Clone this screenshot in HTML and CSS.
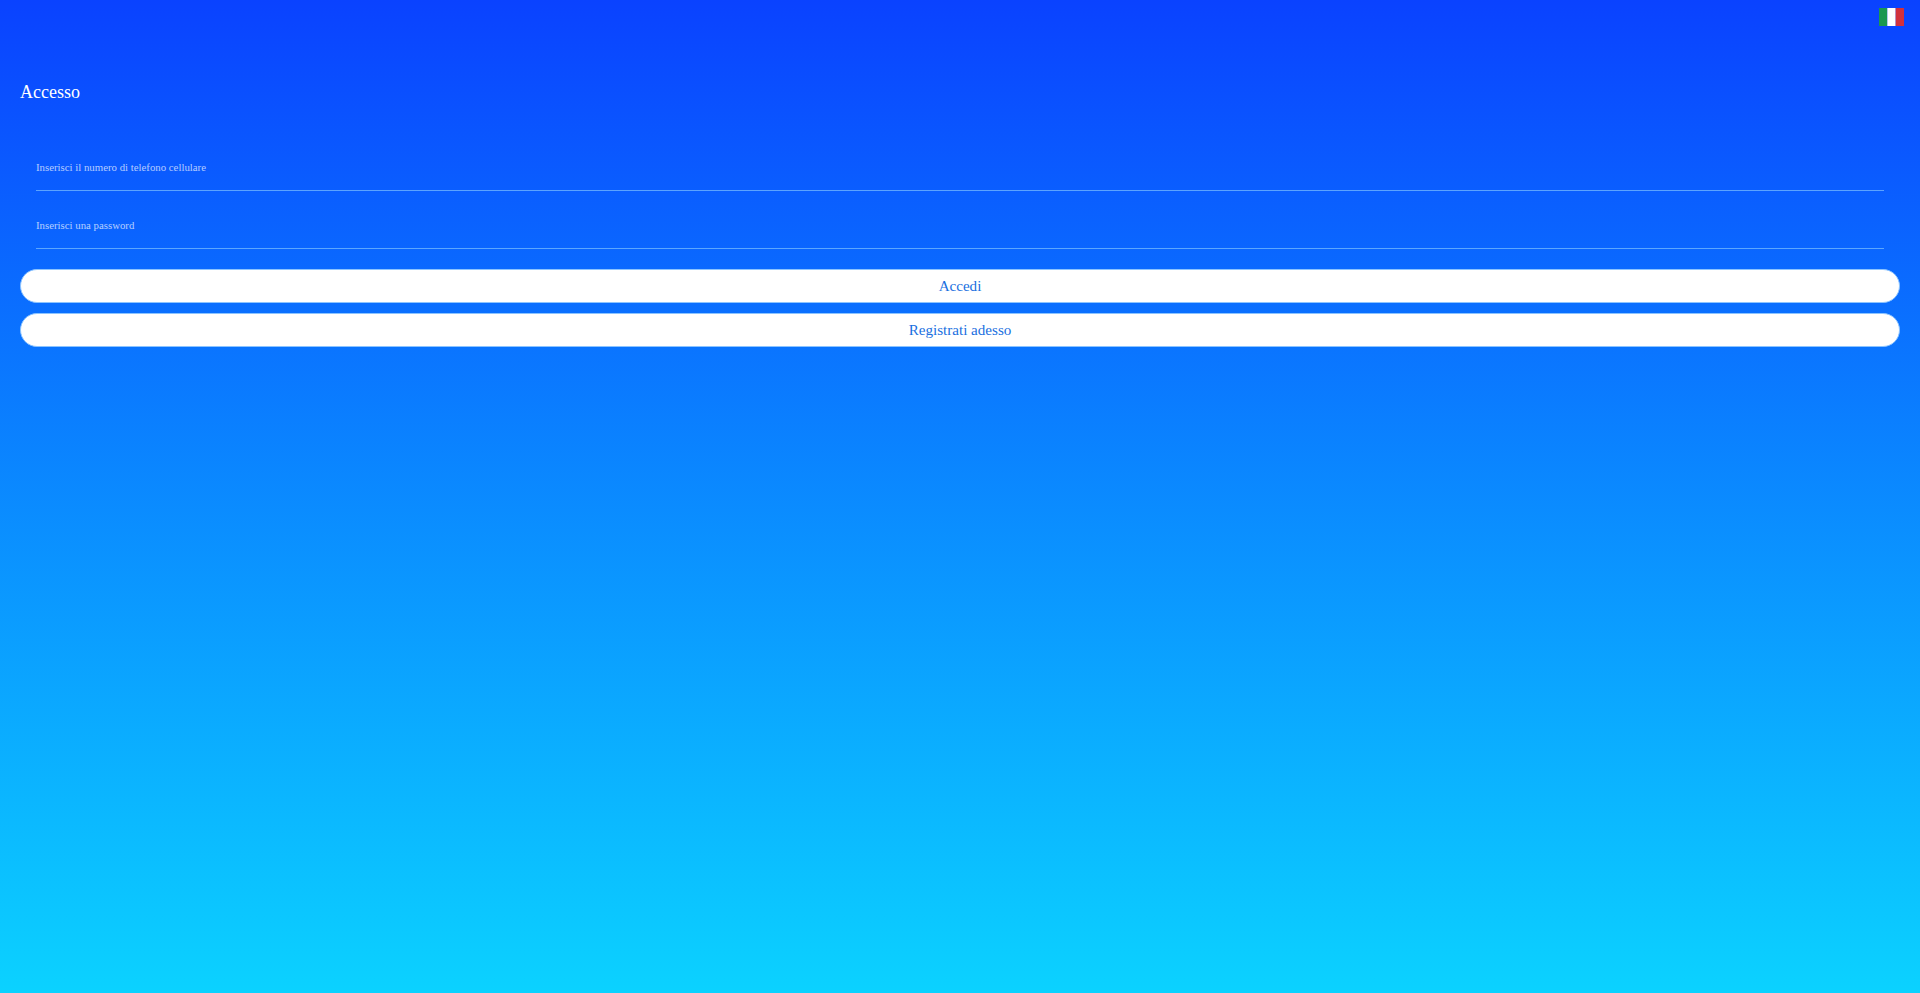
FILE: index.html
```html
<!DOCTYPE html>
<html lang="it">
<head>
<meta charset="utf-8">
<title>Accesso</title>
<link rel="stylesheet" href="styles.css">
</head>
<body>
<div class="topbar">
  <svg class="flag" viewBox="0 0 25 18" width="25" height="18" aria-label="Italiano">
    <rect width="8.33" height="18" fill="#1a9850"/>
    <rect x="8.33" width="8.34" height="18" fill="#fff"/>
    <rect x="16.67" width="8.33" height="18" fill="#d2303c"/>
  </svg>
</div>
<main class="page">
  <h1 class="title">Accesso</h1>
  <form class="form">
    <div class="fields">
      <label class="field"><input class="input" type="tel" placeholder="Inserisci il numero di telefono cellulare"></label>
      <label class="field"><input class="input" type="password" placeholder="Inserisci una password"></label>
    </div>
    <button class="btn" type="button">Accedi</button>
    <button class="btn" type="button">Registrati adesso</button>
  </form>
</main>
</body>
</html>
```
FILE: styles.css
```css
* { box-sizing: border-box; }
html, body { margin: 0; height: 100%; }
body {
  font-family: "Liberation Serif", "Times New Roman", serif;
  background: linear-gradient(180deg, #0a42ff 0%, #0bd2ff 100%);
  overflow: hidden;
}
.topbar { display: flex; justify-content: flex-end; height: 18px; padding-right: 16px; position: relative; top: 8px; }
.flag { display: block; }
.page { padding: 62px 20px 0 20px; }
.title { margin: 0; font-size: 18px; font-weight: 400; line-height: 24px; color: #fff; }
.form { margin-top: 50px; display: flex; flex-direction: column; }
.fields { padding: 0 16px; display: flex; flex-direction: column; gap: 21px; }
.field { display: block; }
.input {
  display: block; width: 100%; height: 37px; padding: 0 0 11px;
  background: transparent; border: 0; border-bottom: 1px solid rgba(160,220,255,.55);
  font: 10.8px "Liberation Serif", serif; color: #fff; outline: 0;
}
.input::placeholder { color: rgba(255,255,255,.7); opacity: 1; }
.btn {
  display: block; width: 100%; height: 34px; margin-top: 10px;
  background: #fff; border: 1px solid #8cc4ff; border-radius: 17px;
  color: #1a6fe0; font: 15.1px "Liberation Serif", serif; cursor: pointer;
}
.fields + .btn { margin-top: 20px; }
```
